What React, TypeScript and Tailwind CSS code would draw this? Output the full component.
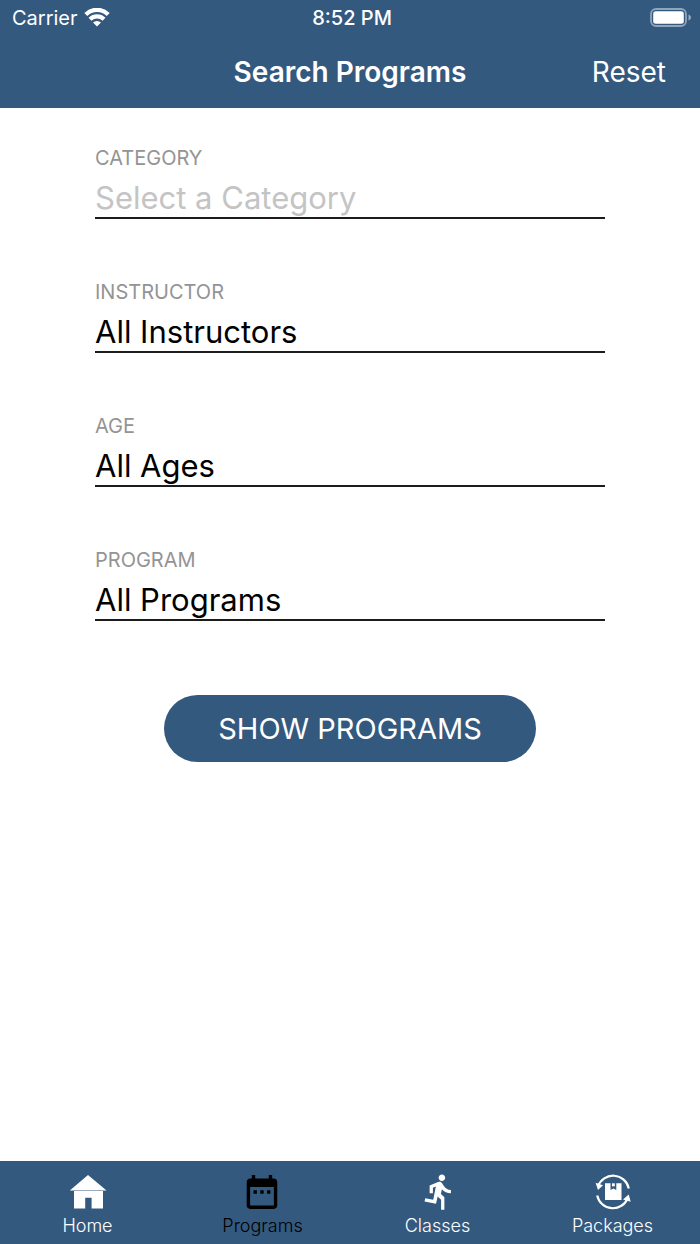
import type { ReactNode } from "react";

type Field = {
  id: string;
  label: string;
  value?: string;
  placeholder?: string;
};

const fields: Field[] = [
  { id: "category", label: "CATEGORY", placeholder: "Select a Category" },
  { id: "instructor", label: "INSTRUCTOR", value: "All Instructors" },
  { id: "age", label: "AGE", value: "All Ages" },
  { id: "program", label: "PROGRAM", value: "All Programs" },
];

export default function App() {
  return (
    <div className="flex min-h-screen flex-col bg-white font-['Inter',sans-serif]">
      <header className="bg-[#34597f] text-white">
        <StatusBar />
        <NavBar />
      </header>
      <main className="flex-1 px-[95px] pt-[38px]">
        <form onSubmit={(e) => e.preventDefault()}>
          <div className="flex flex-col gap-[61px]">
            {fields.map((f) => (
              <PickerField key={f.id} field={f} />
            ))}
          </div>
          <div className="mt-[74px] flex justify-center">
            <button type="submit" className="rounded-full bg-[#34597f] px-[54px] py-4 text-[29px] leading-[35px] text-white">
              SHOW PROGRAMS
            </button>
          </div>
        </form>
      </main>
      <TabBar />
    </div>
  );
}

function StatusBar() {
  return (
    <div className="flex h-9 items-center px-2 text-xl">
      <div className="flex flex-1 items-center gap-1.5 pl-1">
        <span>Carrier</span>
        <WifiIcon />
      </div>
      <span className="font-medium">8:52 PM</span>
      <div className="flex flex-1 justify-end">
        <BatteryIcon />
      </div>
    </div>
  );
}

function NavBar() {
  return (
    <div className="grid h-[72px] grid-cols-[1fr_auto_1fr] items-center px-[34px] text-[28px]">
      <h1 className="col-start-2 font-semibold">Search Programs</h1>
      <button type="button" className="justify-self-end">Reset</button>
    </div>
  );
}

function PickerField({ field }: { field: Field }) {
  return (
    <div className="flex flex-col gap-2.5">
      <label htmlFor={field.id} className="text-xl leading-6 text-[#949494]">{field.label}</label>
      <input
        id={field.id}
        type="text"
        readOnly
        defaultValue={field.value}
        placeholder={field.placeholder}
        className="h-[39px] w-full border-b-2 border-[#1c1c1c] text-[31px] text-black outline-none placeholder:text-[#c4c4c4]"
      />
    </div>
  );
}

function TabBar() {
  return (
    <nav className="grid h-[83px] grid-cols-4 bg-[#34597f] pt-[13px]">
      <Tab label="Home"><HomeIcon /></Tab>
      <Tab label="Programs" active><CalendarIcon /></Tab>
      <Tab label="Classes"><RunIcon /></Tab>
      <Tab label="Packages"><PackageIcon /></Tab>
    </nav>
  );
}

function Tab({ label, active, children }: { label: string; active?: boolean; children: ReactNode }) {
  return (
    <a href="#" aria-current={active ? "page" : undefined} className={`flex flex-col items-center gap-1 text-lg leading-6 font-light ${active ? "text-black" : "text-white"}`}>
      {children}
      <span>{label}</span>
    </a>
  );
}

function WifiIcon() {
  return (
    <svg width="26" height="20" viewBox="0 0 26 20" fill="none" stroke="currentColor" strokeWidth="4.200">
      <path d="M1.800 6.400a15.900 15.900 0 0 1 22.400 0" />
      <path d="M6 11.300a10 10 0 0 1 14 0" />
      <path d="M13 18.600l-4-4a5.700 5.700 0 0 1 8 0z" fill="currentColor" stroke="none" />
    </svg>
  );
}

function BatteryIcon() {
  return (
    <svg width="42" height="20" viewBox="0 0 42 20">
      <rect x="1" y="1" width="35" height="17" rx="5" fill="none" stroke="#8fa5bb" strokeWidth="1.800" />
      <rect x="3.200" y="3.200" width="30.600" height="12.600" rx="2.500" fill="#fff" />
      <path d="M38.500 6.500v6c1.500-.5 2.400-1.600 2.400-3s-.9-2.500-2.400-3z" fill="#9aacbf" />
    </svg>
  );
}

function HomeIcon() {
  return (
    <svg width="40" height="36" viewBox="0 0 40 36" fill="currentColor">
      <path d="M20 1l18.500 15.400H1.800z" />
      <path d="M6 17h29v17.500H23.600V23.700h-6.400v10.800H6z" />
    </svg>
  );
}

function CalendarIcon() {
  return (
    <svg width="38" height="36" viewBox="1.400 1.400 22.400 21.200" fill="currentColor">
      <path d="M9 11H7v2h2v-2zm4 0h-2v2h2v-2zm4 0h-2v2h2v-2zm2-7h-1V2h-2v2H8V2H6v2H5c-1.110 0-1.990.9-1.990 2L3 20c0 1.100.89 2 2 2h14c1.100 0 2-.9 2-2V6c0-1.100-.9-2-2-2zm0 16H5V9h14v11z" />
    </svg>
  );
}

function RunIcon() {
  return (
    <svg width="38" height="36" viewBox="-.500 1.200 23.200 22" fill="currentColor">
      <path d="M13.490 5.480c1.100 0 2-.9 2-2s-.9-2-2-2-2 .9-2 2 .9 2 2 2zm-3.600 13.900l1-4.400 2.100 2v6h2v-7.500l-2.100-2 .6-3c1.300 1.500 3.300 2.500 5.500 2.500v-2c-1.900 0-3.500-1-4.300-2.400l-1-1.600c-.4-.6-1-1-1.700-1-.3 0-.5.1-.8.1l-5.200 2.200v4.700h2v-3.400l1.800-.7-1.600 8.100-4.900-1-.4 2 7 1.400z" />
    </svg>
  );
}

function PackageIcon() {
  return (
    <svg width="40" height="36" viewBox="0 0 40 36" fill="currentColor">
      <g fill="none" stroke="currentColor" strokeWidth="2.200">
        <path d="M5 12.500A16 16 0 0 1 35.800 14.500" />
        <path d="M4.200 21.500A16 16 0 0 0 34.800 24" />
      </g>
      <path d="M2.600 8.800l7.400 2.400L5 16z" />
      <path d="M37.700 27.800l-7.700-2.300 5.700-5z" />
      <path d="M12 9.300h5.500v6.700l2.900-1.500 2.900 1.500V9.300h5.200v16.700H12z" />
      <path d="M19 9.300h2.800v3H19z" />
    </svg>
  );
}
